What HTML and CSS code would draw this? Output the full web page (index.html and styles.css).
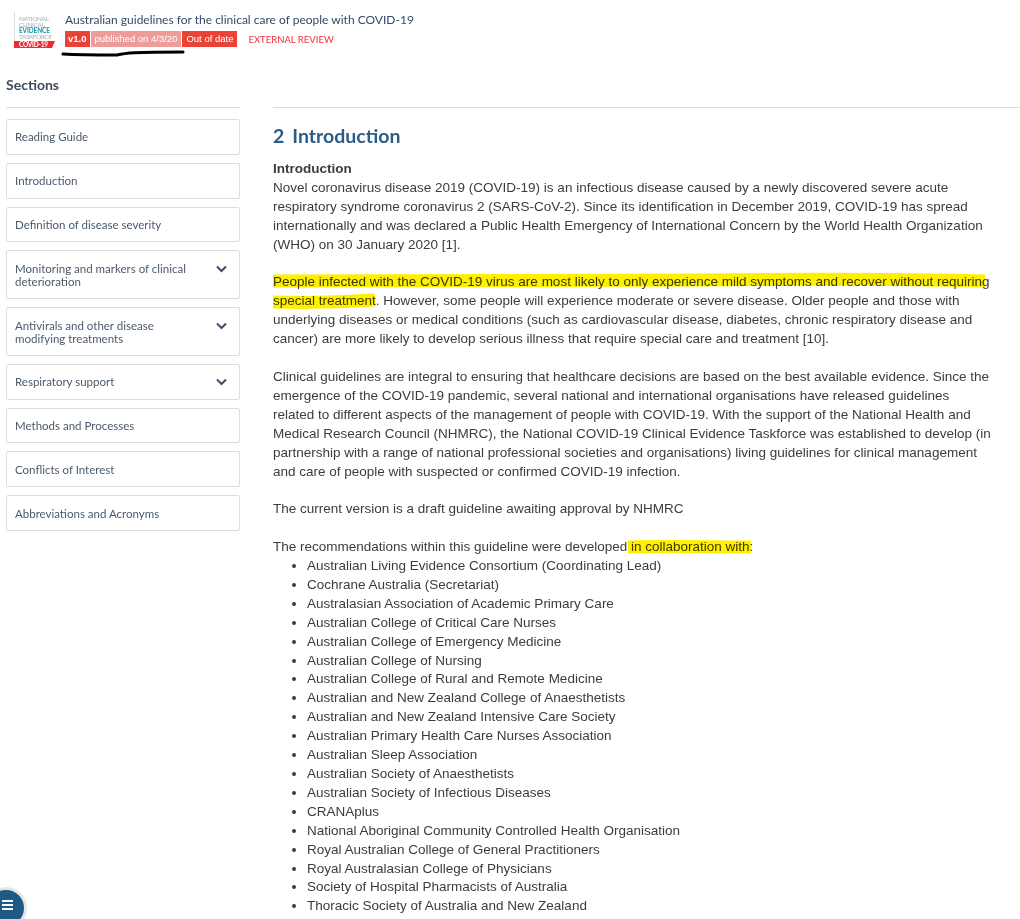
FILE: index.html
```html
<!DOCTYPE html>
<html lang="en">

<head>
  <meta charset="UTF-8">
  <meta name="viewport" content="width=device-width, initial-scale=1.0">
  <title>Australian guidelines for the clinical care of people with COVID-19</title>
  <link rel="stylesheet" href="styles.css">
</head>

<body>
  <!-- Header -->
  <header class="topbar">
    <svg class="logo" width="42" height="38" viewBox="0 0 42 38">
      <rect x="0" y="0" width="1" height="29" fill="#ddd" />
      <g font-family="Lato, sans-serif" font-size="6.500" fill="#a9aeb5">
        <text x="5" y="9" textLength="30">NATIONAL</text>
        <text x="5" y="15" textLength="26">CLINICAL</text>
        <text x="5" y="21" textLength="31" fill="#1a9aa8" font-weight="700">EVIDENCE</text>
        <text x="5" y="26.500" textLength="33">TASKFORCE</text>
      </g>
      <polygon points="0,29 41,29 38,36 0,36" fill="#ed2b33" />
      <text x="5" y="35" textLength="29" font-family="Lato, sans-serif" font-size="6.500" font-weight="700" fill="#fff">COVID-19</text>
    </svg>
    <div class="topbar-text">
      <div class="doc-title">Australian guidelines for the clinical care of people with COVID-19</div>
      <div class="badges">
        <span class="badge badge-version">v1.0</span>
        <span class="badge badge-date">published on 4/3/20</span>
        <span class="badge badge-status">Out of date</span>
        <span class="review">EXTERNAL REVIEW</span>
      </div>
    </div>
  </header>

  <div class="layout">
    <!-- Sections -->
    <aside class="sidebar">
      <h3>Sections</h3>
      <nav class="section-list">
        <a class="section-item">Reading Guide</a>
        <a class="section-item">Introduction</a>
        <a class="section-item">Definition of disease severity</a>
        <a class="section-item">
          <span>Monitoring and markers of clinical deterioration</span>
          <svg class="chevron" width="12" height="8" viewBox="0 0 12 8"><path d="M2 1.500L6.500 6 11 1.500" /></svg>
        </a>
        <a class="section-item">
          <span>Antivirals and other disease modifying treatments</span>
          <svg class="chevron" width="12" height="8" viewBox="0 0 12 8"><path d="M2 1.500L6.500 6 11 1.500" /></svg>
        </a>
        <a class="section-item">
          <span>Respiratory support</span>
          <svg class="chevron" width="12" height="8" viewBox="0 0 12 8"><path d="M2 1.500L6.500 6 11 1.500" /></svg>
        </a>
        <a class="section-item">Methods and Processes</a>
        <a class="section-item">Conflicts of Interest</a>
        <a class="section-item">Abbreviations and Acronyms</a>
      </nav>
    </aside>

    <!-- Content -->
    <main class="content">
      <h2><span class="num">2</span>Introduction</h2>
      <div class="body-text">
        <strong>Introduction</strong><br>
        Novel coronavirus disease 2019 (COVID-19) is an infectious disease caused by a newly discovered severe acute respiratory syndrome coronavirus 2 (SARS-CoV-2). Since its identification in December 2019, COVID-19 has spread internationally and was declared a Public Health Emergency of International Concern by the World Health Organization (WHO) on 30 January 2020 [1].<br><br>
        People infected with the COVID-19 virus are most likely to only experience mild symptoms and recover without requiring special treatment. However, some people will experience moderate or severe disease. Older people and those with underlying diseases or medical conditions (such as cardiovascular disease, diabetes, chronic respiratory disease and cancer) are more likely to develop serious illness that require special care and treatment [10].<br><br>
        Clinical guidelines are integral to ensuring that healthcare decisions are based on the best available evidence. Since the emergence of the COVID-19 pandemic, several national and international organisations have released guidelines related to different aspects of the management of people with COVID-19. With the support of the National Health and Medical Research Council (NHMRC), the National COVID-19 Clinical Evidence Taskforce was established to develop (in partnership with a range of national professional societies and organisations) living guidelines for clinical management and care of people with suspected or confirmed COVID-19 infection.<br><br>
        The current version is a draft guideline awaiting approval by NHMRC<br><br>
        The recommendations within this guideline were developed in collaboration with:
        <ul>
          <li>Australian Living Evidence Consortium (Coordinating Lead)</li>
          <li>Cochrane Australia (Secretariat)</li>
          <li>Australasian Association of Academic Primary Care</li>
          <li>Australian College of Critical Care Nurses</li>
          <li>Australian College of Emergency Medicine</li>
          <li>Australian College of Nursing</li>
          <li>Australian College of Rural and Remote Medicine</li>
          <li>Australian and New Zealand College of Anaesthetists</li>
          <li>Australian and New Zealand Intensive Care Society</li>
          <li>Australian Primary Health Care Nurses Association</li>
          <li>Australian Sleep Association</li>
          <li>Australian Society of Anaesthetists</li>
          <li>Australian Society of Infectious Diseases</li>
          <li>CRANAplus</li>
          <li>National Aboriginal Community Controlled Health Organisation</li>
          <li>Royal Australian College of General Practitioners</li>
          <li>Royal Australasian College of Physicians</li>
          <li>Society of Hospital Pharmacists of Australia</li>
          <li>Thoracic Society of Australia and New Zealand</li>
        </ul>
      </div>
    </main>
  </div>

  <!-- Hand drawn marks on top of the page -->
  <svg class="marks" width="1020" height="919" viewBox="0 0 1020 919">
    <path class="marker" d="M273 281C400 280 560 281 700 280C800 279 900 279 985 281" />
    <path class="marker" d="M273 302C310 303 345 302 375 300" />
    <path class="marker" d="M628 547C670 546 710 547 751 547" />
    <path class="pen" d="M63 54C80 55 105 55 117 55C125 53 135 52 183 52" />
  </svg>

  <button class="fab">
    <span></span><span></span><span></span>
  </button>
</body>

</html>
```

FILE: styles.css
```css
html,
body {
  height: 100%;
  overflow: hidden;
}

body {
  margin: 0;
  background: #fff;
  font-family: "Liberation Sans", Arial, sans-serif;
  color: #3c3c3c;
}

.topbar {
  display: flex;
  align-items: flex-start;
  height: 63px;
  padding: 12px 0 0 14px;
  box-sizing: border-box;
}

.logo {
  flex: none;
  margin-right: 9px;
}

.doc-title {
  font-family: Lato, sans-serif;
  font-size: 12px;
  line-height: 15px;
  color: #38476b;
}

.badges {
  display: flex;
  align-items: center;
  gap: 1px;
  margin-top: 4px;
}

.badge {
  height: 16px;
  padding: 0 4px;
  font-size: 9.500px;
  line-height: 16px;
  color: #fff;
  background: #ea4335;
}

.badge-version {
  padding: 0 3px;
  font-weight: bold;
}

.badge-date {
  background: #ee9c9a;
}

.review {
  margin-left: 10px;
  font-family: Lato, sans-serif;
  font-size: 9.500px;
  color: #f0303a;
}

.layout {
  display: flex;
  padding-left: 6px;
}

.sidebar {
  flex: none;
  width: 234px;
  margin-right: 33px;
}

.sidebar h3 {
  margin: 13px 0 0;
  padding-bottom: 13px;
  border-bottom: 1px solid #ddd;
  font-family: Lato, sans-serif;
  font-size: 14px;
  font-weight: 700;
  line-height: 18px;
  color: #3d4a5c;
}

.section-list {
  display: flex;
  flex-direction: column;
  gap: 8px;
  margin-top: 11px;
}

.section-item {
  display: flex;
  align-items: flex-start;
  justify-content: space-between;
  padding: 10.400px 12px 10.400px 8px;
  border: 1px solid #ddd;
  border-radius: 2px;
  font-family: Lato, sans-serif;
  font-size: 11.500px;
  line-height: 13px;
  color: #4a5a6c;
}

.section-item span {
  width: 180px;
}

.chevron {
  flex: none;
  margin-top: 3px;
  fill: none;
  stroke: #3d4f66;
  stroke-width: 2;
}

.content {
  flex: 1;
  min-width: 0;
  border-top: 1px solid #ddd;
  margin-top: 44px;
}

.content h2 {
  margin: 16px 0 0;
  font-family: Lato, sans-serif;
  font-size: 19.500px;
  font-weight: 700;
  line-height: 24px;
  color: #2c5d88;
}

.num {
  margin-right: 8px;
}

.body-text {
  width: 718px;
  margin-top: 12px;
  font-size: 13.500px;
  line-height: 18.900px;
}

.body-text ul {
  margin: 0;
  padding-left: 34px;
}

.marks {
  position: absolute;
  top: 0;
  left: 0;
  pointer-events: none;
}

.marker {
  fill: none;
  stroke: #fff000;
  stroke-width: 13;
  mix-blend-mode: multiply;
}

.pen {
  fill: none;
  stroke: #000;
  stroke-width: 3;
  stroke-linecap: round;
}

.fab {
  position: fixed;
  left: -15px;
  bottom: -10px;
  display: flex;
  flex-direction: column;
  align-items: center;
  justify-content: center;
  gap: 2px;
  width: 42px;
  height: 42px;
  padding: 0 0 6px 3px;
  box-sizing: border-box;
  border: 3px solid #e6e6e6;
  border-radius: 50%;
  background: #1d5a85;
}

.fab span {
  display: block;
  flex: none;
  width: 11px;
  height: 2px;
  background: #fff;
}
```
